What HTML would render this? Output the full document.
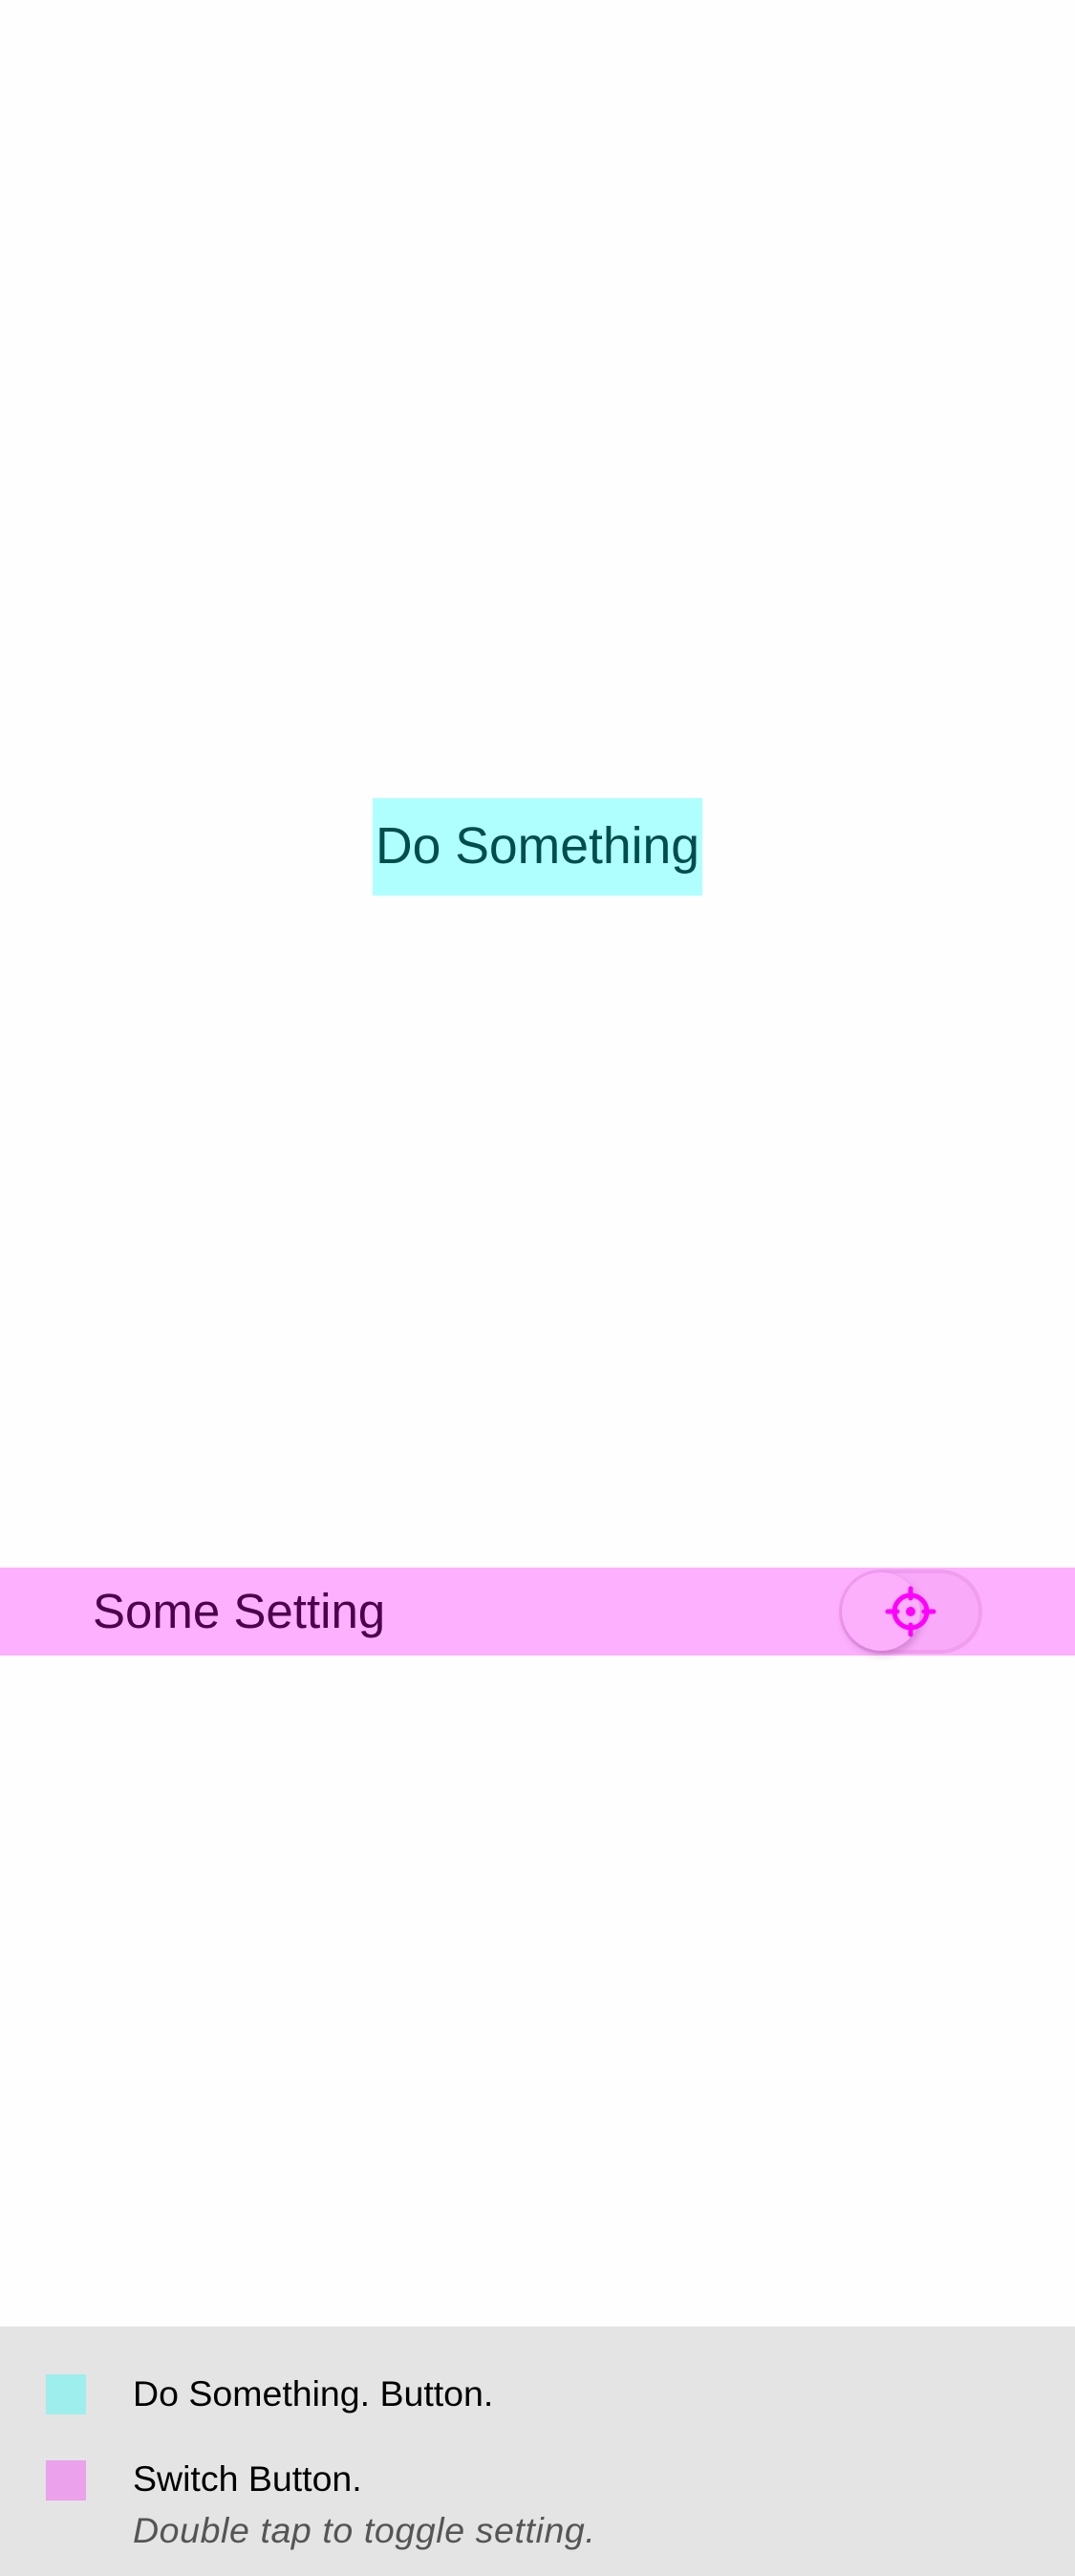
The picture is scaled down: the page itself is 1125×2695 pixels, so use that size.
<!DOCTYPE html>
<html><head><meta charset="utf-8"><style>
html,body{margin:0;padding:0}
body{width:1125px;height:2695px;background:#fefefe;position:relative;overflow:hidden;font-family:"Liberation Sans",sans-serif}
.btn{position:absolute;left:390px;top:835px;width:345px;height:102px;background:#b0ffff;color:#004d4d;font-size:53.5px;line-height:102px;text-align:center;white-space:nowrap}
.bar{position:absolute;left:0;top:1640px;width:1125px;height:92px;background:#fdb0fd}
.bar .t{position:absolute;left:97px;top:0;line-height:92px;font-size:51px;color:#4d004d;white-space:nowrap}
.track{position:absolute;left:878px;top:1642px;width:150px;height:88px;border-radius:44px;background:#f9aaf9;box-shadow:inset 0 0 0 4px rgba(200,100,200,0.18)}
.knob{position:absolute;left:881px;top:1645px;width:82px;height:82px;border-radius:50%;background:#fcb0fc;box-shadow:2px 4px 8px rgba(120,40,120,0.3)}
.panel{position:absolute;left:0;top:2434px;width:1125px;height:261px;background:#e4e4e4}
.sq{position:absolute;left:48px;width:42px;height:42px}
.l{position:absolute;left:139px;font-size:37.5px;color:#000;white-space:nowrap}
.i{font-style:italic;color:#555;letter-spacing:0.6px}
</style></head><body>
<div class="btn">Do Something</div>
<div class="bar"><div class="t">Some Setting</div></div>
<div class="track"></div>
<div class="knob"></div>
<svg style="position:absolute;left:923px;top:1656px" width="60" height="60" viewBox="0 0 60 60">
<circle cx="30" cy="30" r="17" fill="none" stroke="#ff00ff" stroke-width="5"/>
<circle cx="30" cy="30" r="5" fill="#ff00ff"/>
<path d="M30 6V16M30 44V54M6 30H16M44 30H54" stroke="#ff00ff" stroke-width="5" stroke-linecap="round"/>
</svg>
<div class="panel"></div>
<div class="sq" style="top:2484px;background:#9eeeed"></div>
<div class="l" style="top:2483px">Do Something. Button.</div>
<div class="sq" style="top:2574px;background:#eba1eb"></div>
<div class="l" style="top:2572px">Switch Button.</div>
<div class="l i" style="top:2626px">Double tap to toggle setting.</div>
</body></html>
